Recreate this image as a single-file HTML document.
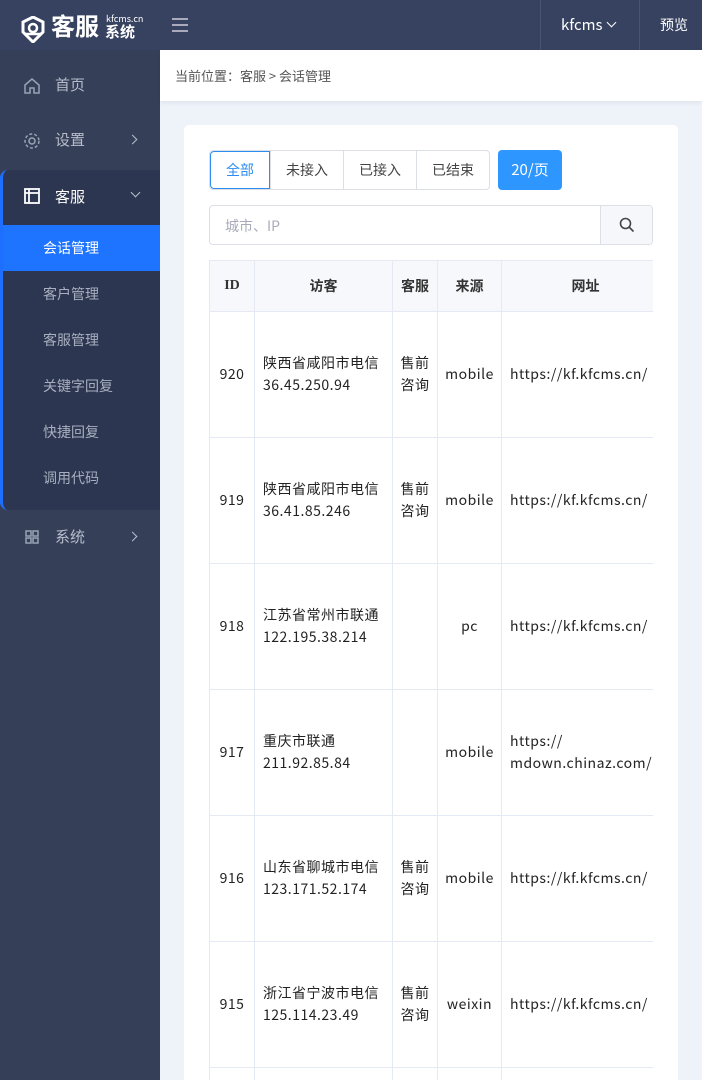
<!DOCTYPE html>
<html><head><meta charset="utf-8"><style>
*{margin:0;padding:0;box-sizing:border-box}
html{overflow:hidden;height:1080px}
body{width:702px;height:1080px;overflow:hidden;background:#eef2f9;font-family:"Noto Sans CJK SC","Liberation Sans",sans-serif;font-size:14px;color:#333;position:relative}
.top{position:absolute;left:0;top:0;width:702px;height:50px;background:#374260;color:#fff}
.side{position:absolute;left:0;top:50px;width:160px;height:1030px;background:#353f57}
.mi{position:absolute;left:0;width:160px;height:56px;color:#b6bdcc;font-size:15px}
.mi .t{position:absolute;left:55px;top:16px}
.arr{position:absolute;left:129px;top:23px;width:7px;height:7px;border-right:1.5px solid #b6bdcc;border-bottom:1.5px solid #b6bdcc;transform:rotate(-45deg)}
.sub{position:absolute;left:0;top:120px;width:160px;height:340px;background:#2c3650;border-left:3px solid #1e6fff;border-radius:8px 0 0 8px}
.si{position:absolute;left:0;width:157px;height:46px;color:#a7afbf;font-size:14px;padding:13px 0 0 40px}
.crumb{position:absolute;left:160px;top:50px;width:542px;height:51px;background:#fff;box-shadow:0 2px 4px rgba(0,0,0,.06);font-size:13px;color:#555;padding:16px 0 0 15px}
.card{position:absolute;left:184px;top:125px;width:494px;height:955px;background:#fff;border-radius:5px 5px 0 0}
.tabs{position:absolute;left:209px;top:150px;height:40px;display:flex;border:1px solid #dcdfe6;border-radius:4px;overflow:hidden}
.tabs div{height:38px;line-height:38px;padding:0 15px;border-left:1px solid #dcdfe6;font-size:14px;color:#444}
.tabs div:first-child{border-left:none;color:#2d8cf0;border:1px solid #2d8cf0;height:38px;line-height:36px;padding:0 15px;border-radius:4px 0 0 4px}
.pg{position:absolute;left:498px;top:150px;width:64px;height:40px;background:#2d96ff;color:#fff;border-radius:4px;text-align:center;line-height:40px;font-size:15px}
.srch{position:absolute;left:209px;top:205px;width:444px;height:40px;border:1px solid #dcdfe6;border-radius:4px;overflow:hidden}
.srch span{position:absolute;left:15px;top:10px;color:#aab;font-size:14px}
.srch .b{position:absolute;right:0;top:0;width:52px;height:38px;background:#f5f7fa;border-left:1px solid #dcdfe6}
.tw{position:absolute;left:209px;top:260px;width:444px;height:820px;overflow:hidden}
table{border-collapse:collapse;width:460px;table-layout:fixed}
td,th{border:1px solid #e4e9f4;text-align:center;font-size:14px;color:#222;line-height:22px}
th{height:51px;background:#f6f8fb;font-weight:bold;color:#333}
td{height:126px;letter-spacing:0.5px;padding-top:0;padding-bottom:2px}
td.l{text-align:left;padding-left:8px;white-space:nowrap}
</style></head><body>
<div class="top">
 <svg style="position:absolute;left:21px;top:16px" width="24" height="27" viewBox="0 0 24 27"><path d="M12 1L22 6V16L12 26L2 16V6Z" fill="none" stroke="#fff" stroke-width="3"/><circle cx="12" cy="12" r="4" fill="none" stroke="#fff" stroke-width="2.5"/><path d="M4 18H20" stroke="#fff" stroke-width="2.5"/></svg>
 <div style="position:absolute;left:51px;top:9px;font-size:24px;line-height:32px;font-weight:bold">客服</div>
 <div style="position:absolute;left:106px;top:14px;font-size:9px;line-height:9px">kfcms.cn</div>
 <div style="position:absolute;left:105px;top:22px;font-size:15px;line-height:20px;font-weight:bold">系统</div>
 <div style="position:absolute;left:172px;top:18px;width:16px;height:2px;background:#aab;box-shadow:0 6px 0 #aab,0 12px 0 #aab"></div>
 <div style="position:absolute;left:540px;top:0;width:1px;height:50px;background:#4a5470"></div>
 <div style="position:absolute;left:639px;top:0;width:1px;height:50px;background:#4a5470"></div>
 <div style="position:absolute;left:561px;top:14px;font-size:15px">kfcms</div>
 <div style="position:absolute;left:608px;top:19px;width:7px;height:7px;border-right:1.5px solid #fff;border-bottom:1.5px solid #fff;transform:rotate(45deg)"></div>
 <div style="position:absolute;left:660px;top:15px;font-size:14px">预览</div>
</div>
<div class="side">
 <div class="mi" style="top:8px"><svg style="position:absolute;left:23px;top:19px" width="18" height="18" viewBox="0 0 18 18" fill="none" stroke="#9aa3b5" stroke-width="1.5"><path d="M2 8L9 2L16 8V16H11V11H7V16H2Z"/></svg><span class="t">首页</span></div>
 <div class="mi" style="top:63px"><svg style="position:absolute;left:23px;top:19px" width="18" height="18" viewBox="0 0 18 18" fill="none" stroke="#9aa3b5" stroke-width="1.5"><circle cx="9" cy="9" r="3"/><circle cx="9" cy="9" r="7" stroke-dasharray="3 2"/></svg><span class="t">设置</span><span class="arr"></span></div>
 <div class="sub">
  <div class="mi" style="top:0;width:157px;color:#fff"><svg style="position:absolute;left:21px;top:18px" width="16" height="16" viewBox="0 0 16 16" fill="none" stroke="#fff" stroke-width="1.8"><rect x="1" y="1" width="14" height="14"/><path d="M5 1V15M1 5H15"/></svg><span class="t" style="left:52px">客服</span><span style="position:absolute;left:129px;top:19px;width:7px;height:7px;border-right:1.5px solid #b6bdcc;border-bottom:1.5px solid #b6bdcc;transform:rotate(45deg)"></span></div>
  <div class="si" style="top:55px;background:#1e74ff;color:#fff">会话管理</div>
  <div class="si" style="top:101px">客户管理</div>
  <div class="si" style="top:147px">客服管理</div>
  <div class="si" style="top:193px">关键字回复</div>
  <div class="si" style="top:239px">快捷回复</div>
  <div class="si" style="top:285px">调用代码</div>
 </div>
 <div class="mi" style="top:460px"><svg style="position:absolute;left:25px;top:20px" width="14" height="14" viewBox="0 0 14 14" fill="none" stroke="#9aa3b5" stroke-width="1.5"><rect x="1" y="1" width="5" height="5"/><rect x="8" y="1" width="5" height="5"/><rect x="1" y="8" width="5" height="5"/><rect x="8" y="8" width="5" height="5"/></svg><span class="t">系统</span><span class="arr"></span></div>
</div>
<div class="crumb">当前位置：客服 &gt; 会话管理</div>
<div class="card"></div>
<div class="tabs"><div>全部</div><div>未接入</div><div>已接入</div><div>已结束</div></div>
<div class="pg">20/页</div>
<div class="srch"><span>城市、IP</span><div class="b"><svg style="position:absolute;left:18px;top:11px" width="16" height="16" viewBox="0 0 16 16" fill="none" stroke="#444" stroke-width="1.6"><circle cx="6.5" cy="6.5" r="5"/><path d="M10 10L14.5 14.5"/></svg></div></div>
<div class="tw">
<table>
<colgroup><col style="width:45px"><col style="width:138px"><col style="width:45px"><col style="width:64px"><col style="width:168px"></colgroup>
<tr><th style="font-family:'Liberation Serif',serif">ID</th><th>访客</th><th>客服</th><th>来源</th><th>网址</th></tr>
<tr><td>920</td><td class="l">陕西省咸阳市电信<br>36.45.250.94</td><td>售前<br>咨询</td><td>mobile</td><td class="l">https://kf.kfcms.cn/</td></tr>
<tr><td>919</td><td class="l">陕西省咸阳市电信<br>36.41.85.246</td><td>售前<br>咨询</td><td>mobile</td><td class="l">https://kf.kfcms.cn/</td></tr>
<tr><td>918</td><td class="l">江苏省常州市联通<br>122.195.38.214</td><td></td><td>pc</td><td class="l">https://kf.kfcms.cn/</td></tr>
<tr><td>917</td><td class="l">重庆市联通<br>211.92.85.84</td><td></td><td>mobile</td><td class="l">https://<br>mdown.chinaz.com/</td></tr>
<tr><td>916</td><td class="l">山东省聊城市电信<br>123.171.52.174</td><td>售前<br>咨询</td><td>mobile</td><td class="l">https://kf.kfcms.cn/</td></tr>
<tr><td>915</td><td class="l">浙江省宁波市电信<br>125.114.23.49</td><td>售前<br>咨询</td><td>weixin</td><td class="l">https://kf.kfcms.cn/</td></tr>
<tr><td></td><td></td><td></td><td></td><td></td></tr>
</table>
</div>
</body></html>
